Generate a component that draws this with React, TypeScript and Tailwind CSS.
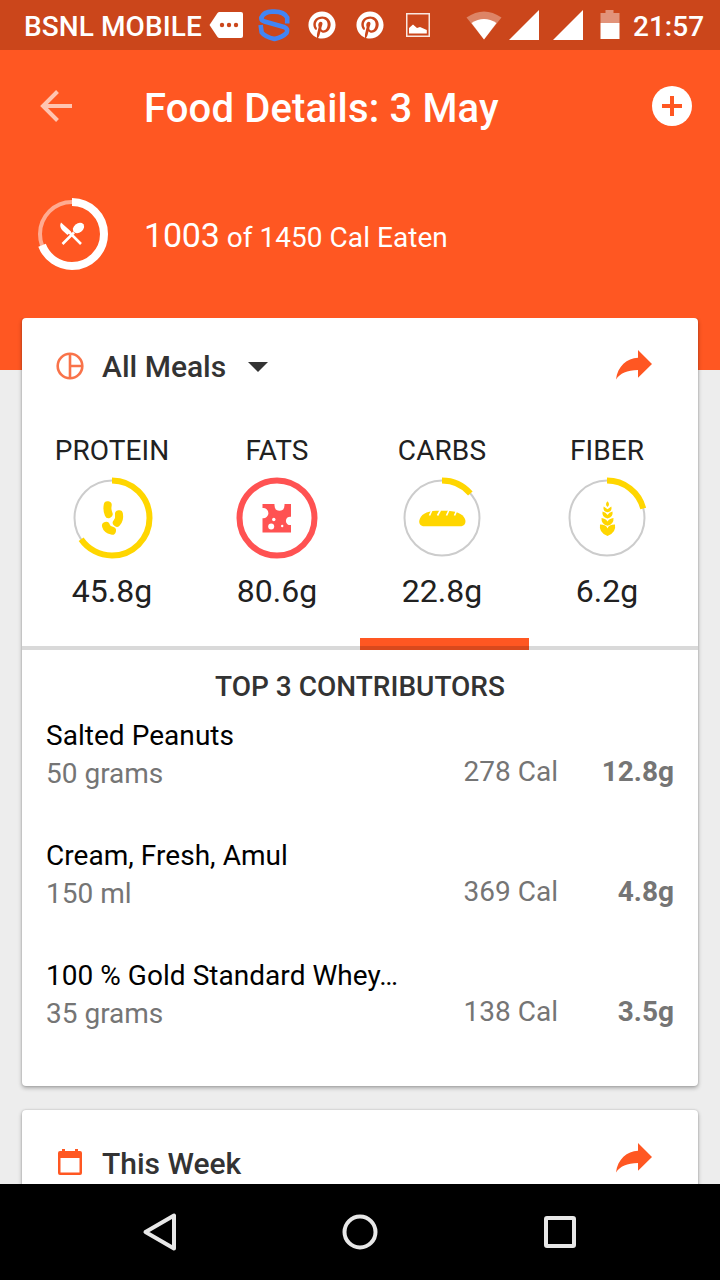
import type { ReactNode } from "react";
import { FaPinterest } from "react-icons/fa";

type RingProps = {
  size: number;
  radius: number;
  degrees: number;
  color: string;
  track: string;
  width: number;
  trackWidth: number;
  children: ReactNode;
};

function Ring({ size, radius, degrees, color, track, width, trackWidth, children }: RingProps) {
  const c = size / 2;
  const length = 2 * Math.PI * radius;
  return (
    <svg width={size} height={size} viewBox={`0 0 ${size} ${size}`} fill="none" className="block shrink-0">
      <circle cx={c} cy={c} r={radius} stroke={track} strokeWidth={trackWidth} />
      <circle
        cx={c}
        cy={c}
        r={radius}
        stroke={color}
        strokeWidth={width}
        strokeDasharray={`${(length * degrees) / 360} ${length}`}
        transform={`rotate(-90 ${c} ${c})`}
      />
      {children}
    </svg>
  );
}

function ShareIcon() {
  return (
    <svg width="38" height="32" viewBox="0 0 38 32" className="block">
      <path d="M23 1v7.800C12 9 2.500 17.500 1 30.500C5 24.500 12 21 23 21V28.800L37 15z" fill="#ff5722" />
    </svg>
  );
}

function StatusBar() {
  return (
    <div className="flex h-[50px] shrink-0 items-center bg-[#cb461b] pl-6 text-white">
      <span className="mt-[3px] w-[184px] text-[28px] leading-8 font-medium tracking-[0.08px] whitespace-nowrap">BSNL MOBILE</span>
      <svg width="36" height="28" viewBox="0 0 36 28" className="ml-px block">
        <path d="M.5 14 8.500 2Q9.300 1 10.500 1H32Q34 1 34 3V25Q34 27 32 27H10.500Q9.300 27 8.500 26z" fill="#fff" />
        <circle cx="13" cy="14" r="2.200" fill="#cb461b" />
        <circle cx="20" cy="14" r="2.200" fill="#cb461b" />
        <circle cx="27" cy="14" r="2.200" fill="#cb461b" />
      </svg>
      <svg width="32" height="34" viewBox="0 0 32 34" className="ml-[13px] block" fill="none" stroke="#4285f4" strokeWidth="4.600">
        <path d="M29.200 15.500V9.500Q26 3.600 16.500 3.600H14Q6 3.600 3.400 9.500Q3 12.500 6.500 13.500L26 19Q30.500 20.500 28.500 25Q25 29 16.500 31Q6.500 28.500 3.700 24.500L2.600 17" />
      </svg>
      <FaPinterest className="ml-[18px] size-7" />
      <FaPinterest className="ml-5 size-7" />
      <svg width="24" height="24" viewBox="0 0 24 24" className="ml-[22px] block">
        <rect x=".75" y=".75" width="22.500" height="22.500" fill="none" stroke="#f9e6e0" strokeWidth="1.500" />
        <path d="M3 20.500V15L7 11.500L11 15L14 14L20.800 17V20.500z" fill="#fff" />
      </svg>
      <svg width="36" height="30" viewBox="0 0 36 30" className="ml-9 block">
        <path d="M.5 7.500Q18-4.500 35.500 7.500L18 29.500z" fill="#dd8466" />
        <path d="M5.500 13Q18 5 30.500 13L18 29.500z" fill="#fff" />
      </svg>
      <svg width="30" height="30" viewBox="0 0 30 30" className="ml-[7px] block">
        <path d="M30 0V30H0z" fill="#fff" />
      </svg>
      <svg width="30" height="30" viewBox="0 0 30 30" className="ml-3.5 block">
        <path d="M30 0V30H0z" fill="#fff" />
      </svg>
      <svg width="20" height="30" viewBox="0 0 20 30" className="ml-[17px] block">
        <path d="M5.500 0H13.500V3H19.500V13H.5V3H5.500z" fill="#e2937a" />
        <path d="M.5 13H19.500V29H.5z" fill="#fff" />
      </svg>
      <span className="mt-[3px] ml-[13px] text-[28px] leading-8 font-medium">21:57</span>
    </div>
  );
}

const GOLD = "#ffd600";
const GREY = "#cccccc";

function Beans() {
  return (
    <g stroke={GOLD} strokeWidth="8" strokeLinecap="round" fill="none">
      <path d="M37.700 29.300Q36.800 34 38.600 38" />
      <path d="M49 38.300Q49.800 43.500 46.800 46.700" />
      <path d="M36 49.900Q37 53.500 42 54.700" />
    </g>
  );
}

function Cheese() {
  return (
    <g>
      <path d="M27.500 28H39.500Q39 34.800 44.500 34.800T49.500 28H56V40.800A4.200 4.200 0 1 0 56 49V56.500H27.500V42.300A5.200 5.200 0 1 0 27.500 32z" fill="#ff5252" />
      <circle cx="38.800" cy="43.500" r="1.700" fill="#fff" />
      <circle cx="36.200" cy="50.500" r="3" fill="#fff" />
      <circle cx="47.200" cy="50" r="1.200" fill="#fff" />
    </g>
  );
}

function Bread() {
  return (
    <g>
      <path d="M23 50.200Q19 49.500 19.200 45Q21 35.500 36 34.800H48Q64 36 65.500 45Q65.500 49.500 61.500 50.200z" fill={GOLD} />
      <path d="M32 34L29.500 39.500M40.500 34L37.500 39.500M49 34L46.500 39.500M56.500 35L54.500 39.500" stroke="#fff" strokeWidth="1.600" />
    </g>
  );
}

function Wheat() {
  return (
    <g fill={GOLD}>
      <path d="M42.500 25.200Q45.500 28.200 42.500 31Q39.500 28.200 42.500 25.200" />
      <path d="M38.700 30.500L42.500 33.300L46.300 30.500Q47.500 35.500 42.500 36.300Q37.500 35.500 38.700 30.500" />
      <path d="M37.500 35.500Q41 36 42.500 39Q44 36 47.500 35.500Q48.500 41 42.500 42.500Q36.500 41 37.500 35.500" />
      <path d="M36.500 42Q41 42.500 42.500 45.500Q44 42.500 48.500 42Q49 48 42.500 49.800Q36 48 36.500 42" />
      <path d="M35 48.500Q41.500 48.500 42.500 52.500Q43.500 48.500 50 48.500Q51.500 56.500 42.500 60Q33.500 56.500 35 48.500" />
    </g>
  );
}

const nutrients = [
  { label: "PROTEIN", value: "45.8g", degrees: 235, color: GOLD, icon: <Beans /> },
  { label: "FATS", value: "80.6g", degrees: 360, color: "#ff5252", icon: <Cheese /> },
  { label: "CARBS", value: "22.8g", degrees: 49, color: GOLD, icon: <Bread /> },
  { label: "FIBER", value: "6.2g", degrees: 75, color: GOLD, icon: <Wheat /> },
];

const foods = [
  { name: "Salted Peanuts", amount: "50 grams", cal: "278 Cal", grams: "12.8g" },
  { name: "Cream, Fresh, Amul", amount: "150 ml", cal: "369 Cal", grams: "4.8g" },
  { name: "100 % Gold Standard Whey…", amount: "35 grams", cal: "138 Cal", grams: "3.5g" },
];

const cardShadow = "shadow-[0_2px_4px_rgba(0,0,0,0.3),0_0_2px_rgba(0,0,0,0.2)]";

export default function App() {
  return (
    <div className="flex h-[1280px] w-[720px] flex-col overflow-hidden bg-[#ededed] font-['Roboto',sans-serif]">
      <StatusBar />
      <header className="h-[320px] shrink-0 bg-[#ff5722] text-white">
        <div className="flex h-28 items-center pr-7 pl-10">
          <svg width="32" height="32" viewBox="0 0 32 32" className="block" fill="none" stroke="#ffc4b1" strokeWidth="4">
            <path d="M32 16H3M17.500 1.500L3 16L17.500 30.500" />
          </svg>
          <h1 className="mt-1.5 ml-[72px] flex-1 text-[40px] leading-[48px] font-medium tracking-[0.15px]">Food Details: 3 May</h1>
          <svg width="40" height="40" viewBox="0 0 40 40" className="block">
            <circle cx="20" cy="20" r="20" fill="#fff" />
            <path d="M20 10V30M10 20H30" stroke="#ff5722" strokeWidth="4" />
          </svg>
        </div>
        <div className="flex h-36 items-center pl-9">
          <Ring size={72} radius={32} degrees={249} color="#fff" track="#ffab91" width={8} trackWidth={4}>
            <path d="M26.500 46L38 34.500M45 46L33 34" stroke="#fff" strokeWidth="2.600" />
            <path d="M25 24.500L35 33.500L31.500 37L26.500 32.500Q23 28.500 25 24.500" fill="#fff" />
            <ellipse cx="42.500" cy="30" rx="6.200" ry="4.600" transform="rotate(-38 42.500 30)" fill="#fff" />
          </Ring>
          <p className="mt-1 ml-9 text-[28px] leading-10 tracking-[0.05px]">
            <span className="text-[34px] tracking-[-0.2px]">1003</span> of 1450 Cal Eaten
          </p>
        </div>
      </header>

      <main className="-mt-[52px] flex min-h-0 flex-1 flex-col gap-6 overflow-hidden px-[22px]">
        <section className={`flex h-[768px] shrink-0 flex-col rounded bg-white ${cardShadow}`}>
          <div className="flex h-24 items-center pr-[45px] pl-[34px]">
            <svg width="28" height="28" viewBox="0 0 28 28" className="block" fill="none" stroke="#f9734a" strokeWidth="2.600">
              <circle cx="14" cy="14" r="12.300" />
              <path d="M14 1V27M14 14H27" />
            </svg>
            <h2 className="mt-0.5 ml-[18px] text-[30px] leading-9 font-medium text-[#333]">All Meals</h2>
            <svg width="20" height="10" viewBox="0 0 20 10" className="mt-0.5 ml-[22px] block">
              <path d="M0 0H20L10 10z" fill="#333" />
            </svg>
            <div className="mb-0.5 ml-auto">
              <ShareIcon />
            </div>
          </div>
          <div className="flex h-[236px] justify-center pt-[21px] pr-px">
            {nutrients.map((n) => (
              <div key={n.label} className="flex w-[165px] flex-col items-center text-[#212121]">
                <span className="mb-[9px] text-[28px] leading-8 tracking-[0.1px]">{n.label}</span>
                <Ring size={84} radius={37.5} degrees={n.degrees} color={n.color} track={GREY} width={6} trackWidth={2}>
                  {n.icon}
                </Ring>
                <span className="mt-[11px] text-[32px] leading-10">{n.value}</span>
              </div>
            ))}
          </div>
          <div className="-mt-3 grid h-3 grid-cols-4 items-end">
            <div className="h-1 bg-[#d9d9d9]" />
            <div className="h-1 bg-[#d9d9d9]" />
            <div className="h-3 border-b-4 border-[#d9491d] bg-[#ff5722]" />
            <div className="h-1 bg-[#d9d9d9]" />
          </div>
          <h3 className="mt-[21px] text-center text-[28px] leading-8 font-medium text-[#333]">TOP 3 CONTRIBUTORS</h3>
          <ul className="mt-3.5 flex flex-col px-6">
            {foods.map((f) => (
              <li key={f.name} className="flex h-[120px] text-[28px] text-[#757575]">
                <div className="flex-1">
                  <p className="leading-[38px] tracking-[0.04px] whitespace-nowrap text-black">{f.name}</p>
                  <p className="leading-[38px]">{f.amount}</p>
                </div>
                <span className="mt-9 leading-[38px]">{f.cal}</span>
                <span className="mt-9 w-[116px] text-right leading-[38px] font-bold">{f.grams}</span>
              </li>
            ))}
          </ul>
        </section>

        <section className={`h-40 shrink-0 rounded bg-white ${cardShadow}`}>
          <div className="flex h-[98px] items-center pr-[45px] pl-[35px]">
            <svg width="26" height="28" viewBox="0 0 26 28" className="mt-1.5 block">
              <path d="M5 1H8V3H18V1H21V3H23Q25 3 25 5V25Q25 27 23 27H3Q1 27 1 25V5Q1 3 3 3H5zM3.500 10V24.500H22.500V10z" fill="#ff5722" fillRule="evenodd" />
            </svg>
            <h2 className="mt-[9px] ml-[19px] text-[30px] leading-9 font-medium text-[#333]">This Week</h2>
            <div className="mb-0.5 ml-auto">
              <ShareIcon />
            </div>
          </div>
        </section>
      </main>

      <nav className="flex h-24 shrink-0 items-center bg-black">
        <svg width="36" height="40" viewBox="0 0 36 40" className="ml-[142px] block" fill="none" stroke="#e8e8e8" strokeWidth="4" strokeLinejoin="round">
          <path d="M32 3.500V36.500L3.500 20z" />
        </svg>
        <svg width="36" height="36" viewBox="0 0 36 36" className="ml-[164px] block" fill="none" stroke="#e8e8e8" strokeWidth="4">
          <circle cx="18" cy="18" r="15.500" />
        </svg>
        <svg width="32" height="32" viewBox="0 0 32 32" className="ml-[166px] block" fill="none" stroke="#e8e8e8" strokeWidth="4">
          <rect x="2" y="2" width="28" height="28" rx="1" />
        </svg>
      </nav>
    </div>
  );
}
